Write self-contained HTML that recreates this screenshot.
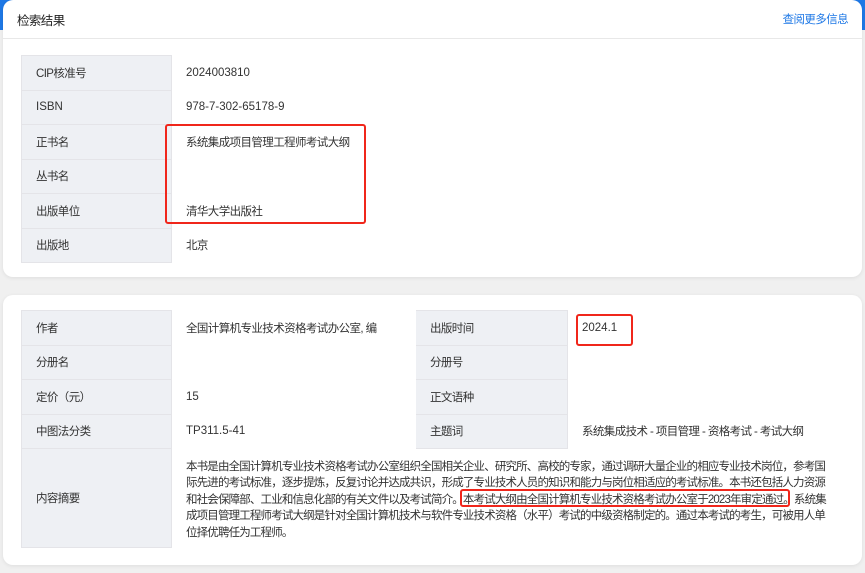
<!DOCTYPE html>
<html><head><meta charset="utf-8"><style>
*{margin:0;padding:0;box-sizing:border-box}
body{width:865px;height:573px;background:#f0f0f0;font-family:"Liberation Sans","Noto Sans CJK SC",sans-serif;font-size:11.5px;letter-spacing:-0.6px;color:#333;position:relative;overflow:hidden}
.blue{position:absolute;left:0;top:0;width:865px;height:30px;background:#1e78e6}
.card{position:absolute;left:3px;width:859px;background:#fff;border-radius:10px;box-shadow:0 1px 4px rgba(0,0,0,.08)}
.hdr{height:39px;border-bottom:1px solid #e8e8e8;display:flex;justify-content:space-between;align-items:center;padding:0 14px 0 14px}
.hdr .t{font-size:12.5px;color:#222}
.hdr .l{font-size:11.5px;color:#1e78e6}
table{position:absolute;border-collapse:collapse;table-layout:fixed}
td{border:1px solid #e4e4e8;height:34.5px;padding:0 14px;vertical-align:middle;white-space:nowrap}
td.k{background:#eef0f4;color:#333}
td.v{border-color:#fff}
.n{letter-spacing:0}
td.ab{line-height:16.5px;letter-spacing:-0.85px;padding-top:4px}
.box{position:absolute;border:2px solid #f0261b;border-radius:3px}
</style></head><body>
<div class="blue"></div>
<div class="card" style="top:0;height:277px">
<div class="hdr"><span class="t">检索结果</span><span class="l">查阅更多信息</span></div>
<table style="left:18px;top:55px;width:824px">
<col style="width:150px"><col>
<tr><td class="k">CIP核准号</td><td class="v n">2024003810</td></tr>
<tr><td class="k n">ISBN</td><td class="v n">978-7-302-65178-9</td></tr>
<tr><td class="k">正书名</td><td class="v">系统集成项目管理工程师考试大纲</td></tr>
<tr><td class="k">丛书名</td><td class="v"></td></tr>
<tr><td class="k">出版单位</td><td class="v">清华大学出版社</td></tr>
<tr><td class="k">出版地</td><td class="v">北京</td></tr>
</table>
</div>
<div class="card" style="top:295px;height:270px">
<table style="left:18px;top:15px;width:824px">
<col style="width:150px"><col style="width:244px"><col style="width:152px"><col>
<tr><td class="k">作者</td><td class="v">全国计算机专业技术资格考试办公室, 编</td><td class="k">出版时间</td><td class="v n">2024.1</td></tr>
<tr><td class="k">分册名</td><td class="v"></td><td class="k">分册号</td><td class="v"></td></tr>
<tr><td class="k">定价（元）</td><td class="v n">15</td><td class="k">正文语种</td><td class="v"></td></tr>
<tr><td class="k">中图法分类</td><td class="v n">TP311.5-41</td><td class="k">主题词</td><td class="v">系统集成技术 - 项目管理 - 资格考试 - 考试大纲</td></tr>
<tr><td class="k" style="height:99px">内容摘要</td><td class="v ab" colspan="3">本书是由全国计算机专业技术资格考试办公室组织全国相关企业、研究所、高校的专家，通过调研大量企业的相应专业技术岗位，参考国<br>际先进的考试标准，逐步提炼，反复讨论并达成共识，形成了专业技术人员的知识和能力与岗位相适应的考试标准。本书还包括人力资源<br>和社会保障部、工业和信息化部的有关文件以及考试简介。本考试大纲由全国计算机专业技术资格考试办公室于2023年审定通过。系统集<br>成项目管理工程师考试大纲是针对全国计算机技术与软件专业技术资格（水平）考试的中级资格制定的。通过本考试的考生，可被用人单<br>位择优聘任为工程师。</td></tr>
</table>
</div>
<div class="box" style="left:165px;top:124px;width:201px;height:100px"></div>
<div class="box" style="left:576px;top:314px;width:57px;height:32px"></div>
<div class="box" style="left:460px;top:489px;width:330px;height:18px"></div>
</body></html>
